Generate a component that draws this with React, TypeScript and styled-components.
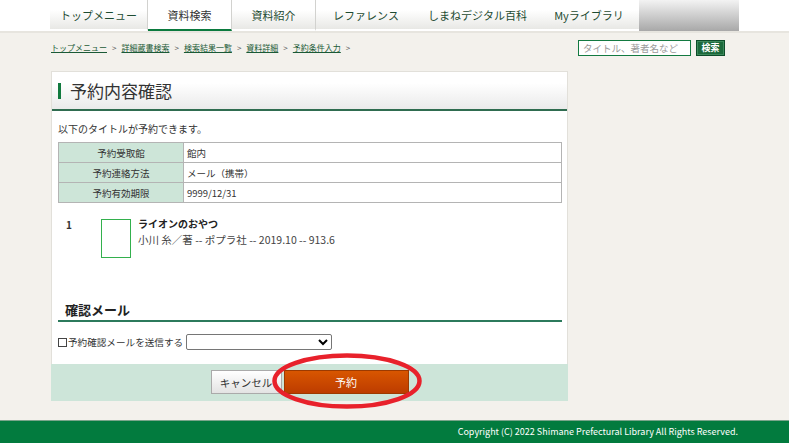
import React from "react";
import styled, { createGlobalStyle } from "styled-components";

const GlobalStyle = createGlobalStyle`
  html, body {
    margin: 0;
    padding: 0;
  }
  body {
    background: #f3f1ec;
    font-family: "Noto Sans CJK JP", "Noto Sans", sans-serif;
    color: #333;
  }
`;

const Container = styled.div`
  width: 689px;
  margin: 0 auto;
  box-sizing: border-box;
`;

const TopBar = styled.header`
  background: #fff;
  border-bottom: 2px solid #e7e5df;
`;

const Nav = styled(Container)`
  display: flex;
  height: 31px;
`;

const Tab = styled.a<{ $w: number; $active?: boolean; $divider?: boolean }>`
  width: ${(p) => p.$w}px;
  height: 31px;
  box-sizing: border-box;
  display: flex;
  align-items: center;
  justify-content: center;
  font-size: 11px;
  text-decoration: none;
  color: ${(p) => (p.$active ? "#333" : "#1d4b31")};
  background: ${(p) =>
    p.$active ? "#fff" : "linear-gradient(#ffffff 35%, #e8e8e5)"};
  border-bottom: 2px solid ${(p) => (p.$active ? "#0b7a3e" : "transparent")};
  border-right: ${(p) => (p.$divider ? "1px solid #d2d2cf" : "none")};
`;

const NavFiller = styled.div`
  width: 100px;
  height: 31px;
  background: linear-gradient(#f3f3f3, #a8a8a8);
`;

const SubBar = styled(Container)`
  display: flex;
  justify-content: space-between;
  align-items: flex-start;
  height: 38px;
  padding: 7px 14px 0 1px;
`;

const Crumbs = styled.div`
  margin-top: 2px;
  font-size: 8px;
  line-height: 12px;
  color: #555;
  a {
    color: #1a5a36;
    text-decoration: underline;
  }
  span {
    margin: 0 5px;
  }
`;

const SearchForm = styled.div`
  display: flex;
  gap: 5px;
`;

const SearchInput = styled.input`
  width: 113px;
  height: 16px;
  box-sizing: border-box;
  border: 1px solid #137a41;
  padding: 0 4px;
  font-family: inherit;
  font-size: 9.5px;
  outline: none;
  &::placeholder {
    color: #9a9a9a;
  }
`;

const SearchButton = styled.button`
  width: 29px;
  height: 16px;
  padding: 0;
  border: 1px solid #0d4c29;
  box-shadow: inset 0 0 0 1px #3d8a5c;
  background: #1d6a3c;
  color: #fff;
  font-family: inherit;
  font-size: 9px;
  font-weight: bold;
  line-height: 14px;
`;

const Main = styled(Container)`
  padding-left: 1px;
  margin-bottom: 19px;
`;

const Panel = styled.section`
  width: 517px;
  box-sizing: border-box;
  background: #fff;
  border: 1px solid #e2e0da;
  border-bottom: none;
`;

const PanelHeader = styled.div`
  height: 39px;
  box-sizing: border-box;
  display: flex;
  align-items: center;
  padding-left: 6px;
  background: linear-gradient(#ffffff 30%, #eaeaea);
  border-bottom: 2px solid #2f6c50;
`;

const Title = styled.h1`
  margin: 0;
  display: flex;
  align-items: center;
  font-size: 17px;
  font-weight: normal;
  line-height: 20px;
  color: #333;
  &::before {
    content: "";
    width: 3px;
    height: 16px;
    background: #127a3f;
    margin-right: 9px;
  }
`;

const PanelBody = styled.div`
  padding: 0 5px 14px 6px;
`;

const Intro = styled.p`
  margin: 11px 0 6px;
  font-size: 10px;
  line-height: 14px;
  color: #333;
`;

const InfoTable = styled.table`
  width: 100%;
  border-collapse: collapse;
  font-size: 9.5px;
  color: #333;
  th,
  td {
    height: 19px;
    padding: 0;
    border: 1px solid #b4b4b4;
  }
  th {
    width: 124px;
    background: #cde5d8;
    font-weight: normal;
    text-align: center;
  }
  td {
    padding-left: 3px;
  }
`;

const ItemRow = styled.div`
  display: flex;
  align-items: flex-start;
  margin-top: 13px;
`;

const ItemNo = styled.div`
  width: 35px;
  padding: 2px 0 0 8px;
  font-size: 10px;
  font-weight: bold;
  line-height: 14px;
`;

const Thumb = styled.div`
  width: 30px;
  height: 39px;
  box-sizing: border-box;
  margin: 3px 7px 0 0;
  border: 1px solid #33b04d;
`;

const ItemTitle = styled.div`
  margin-top: 1px;
  font-size: 10px;
  font-weight: bold;
  line-height: 14px;
  color: #222;
`;

const ItemMeta = styled.div`
  margin-top: 2px;
  font-size: 10.5px;
  line-height: 14px;
  color: #444;
`;

const SectionHeading = styled.h2`
  margin: 42px 0 0;
  padding-left: 7px;
  font-size: 13px;
  font-weight: bold;
  line-height: 20px;
  color: #222;
  border-bottom: 2px solid #2c7a5c;
`;

const CheckRow = styled.label`
  display: flex;
  align-items: center;
  margin-top: 12px;
  font-size: 9.6px;
  line-height: 16px;
  color: #333;
`;

const Check = styled.input`
  appearance: none;
  width: 9px;
  height: 9px;
  margin: 0 1px 0 0;
  border: 1px solid #444;
  background: #fff;
`;

const MailSelect = styled.select`
  width: 146px;
  height: 16px;
  margin-left: 3px;
  padding: 0;
  border: 1px solid #767676;
  border-radius: 2px;
  background: #fff;
  font-size: 9px;
`;

const PanelFooter = styled.div`
  height: 37px;
  margin: 0 -1px;
  box-sizing: border-box;
  padding-top: 6px;
  display: flex;
  justify-content: center;
  align-items: flex-start;
  gap: 2px;
  background: #cde5d9;
`;

const Button = styled.button<{ $primary?: boolean }>`
  width: ${(p) => (p.$primary ? 125 : 71)}px;
  height: 24px;
  padding: 0;
  font-family: inherit;
  font-size: ${(p) => (p.$primary ? 11 : 10.5)}px;
  color: ${(p) => (p.$primary ? "#fff" : "#333")};
  border: 1px solid ${(p) => (p.$primary ? "#9c3a00" : "#aaa")};
  background: ${(p) =>
    p.$primary
      ? "linear-gradient(#d85600, #bd3c00)"
      : "linear-gradient(#ffffff, #e3e3e3)"};
`;

const Highlight = styled.span`
  position: relative;
  display: inline-flex;
  svg {
    position: absolute;
    left: -12px;
    top: -17px;
    pointer-events: none;
  }
`;

const Footer = styled.footer`
  border-top: 1px solid #7aa58b;
  background: #027b3e;
  height: 22px;
`;

const FooterInner = styled(Container)`
  text-align: right;
  padding-right: 1px;
  font-size: 9px;
  line-height: 22px;
  color: #fff;
`;

const tabs = [
  { label: "トップメニュー", w: 98, divider: true },
  { label: "資料検索", w: 84, active: true, divider: true },
  { label: "資料紹介", w: 84, divider: true },
  { label: "レファレンス", w: 100 },
  { label: "しまねデジタル百科", w: 123 },
  { label: "Myライブラリ", w: 100 },
];

const crumbs = ["トップメニュー", "詳細蔵書検索", "検索結果一覧", "資料詳細", "予約条件入力"];

const info = [
  ["予約受取館", "館内"],
  ["予約連絡方法", "メール（携帯）"],
  ["予約有効期限", "9999/12/31"],
];

export default function App() {
  return (
    <>
      <GlobalStyle />
      <TopBar>
        <Nav>
          {tabs.map((t) => (
            <Tab key={t.label} $w={t.w} $active={t.active} $divider={t.divider}>
              {t.label}
            </Tab>
          ))}
          <NavFiller />
        </Nav>
      </TopBar>

      <SubBar>
        <Crumbs>
          {crumbs.map((c) => (
            <React.Fragment key={c}>
              <a>{c}</a>
              <span>&gt;</span>
            </React.Fragment>
          ))}
        </Crumbs>
        <SearchForm>
          <SearchInput placeholder="タイトル、著者名など" />
          <SearchButton>検索</SearchButton>
        </SearchForm>
      </SubBar>

      <Main>
        <Panel>
          <PanelHeader>
            <Title>予約内容確認</Title>
          </PanelHeader>
          <PanelBody>
            <Intro>以下のタイトルが予約できます。</Intro>
            <InfoTable>
              <tbody>
                {info.map(([k, v]) => (
                  <tr key={k}>
                    <th>{k}</th>
                    <td>{v}</td>
                  </tr>
                ))}
              </tbody>
            </InfoTable>

            <ItemRow>
              <ItemNo>1</ItemNo>
              <Thumb />
              <div>
                <ItemTitle>ライオンのおやつ</ItemTitle>
                <ItemMeta>小川 糸／著 -- ポプラ社 -- 2019.10 -- 913.6</ItemMeta>
              </div>
            </ItemRow>

            <SectionHeading>確認メール</SectionHeading>
            <CheckRow>
              <Check type="checkbox" />
              予約確認メールを送信する
              <MailSelect defaultValue="">
                <option value=""></option>
              </MailSelect>
            </CheckRow>
          </PanelBody>
          <PanelFooter>
            <Button>キャンセル</Button>
            <Highlight>
              <Button $primary>予約</Button>
              <svg width="150" height="56" viewBox="0 0 150 56">
                <ellipse
                  cx="75"
                  cy="28"
                  rx="72.5"
                  ry="25.5"
                  fill="none"
                  stroke="#e8212b"
                  strokeWidth="4.5"
                />
              </svg>
            </Highlight>
          </PanelFooter>
        </Panel>
      </Main>

      <Footer>
        <FooterInner>
          Copyright (C) 2022 Shimane Prefectural Library All Rights Reserved.
        </FooterInner>
      </Footer>
    </>
  );
}
